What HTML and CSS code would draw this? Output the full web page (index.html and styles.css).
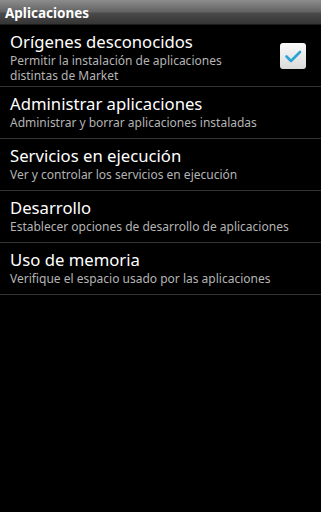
FILE: index.html
```html
<!DOCTYPE html>
<html lang="es">
<head>
  <meta charset="UTF-8">
  <title>Aplicaciones</title>
  <meta name="viewport" content="width=device-width, initial-scale=1.0">
  <link rel="stylesheet" href="styles.css">
</head>
<body>
  <header class="titlebar">Aplicaciones</header>
  <ul class="prefs">
    <li class="pref tall">
      <div class="pref-text">
        <div class="pref-title">Orígenes desconocidos</div>
        <div class="pref-summary">Permitir la instalación de aplicaciones distintas de Market</div>
      </div>
      <span class="check">
        <svg viewBox="0 0 26 26" width="26" height="26">
          <path d="M6.5 13.5 L11 18 L20 9" fill="none" stroke="#2aa5d3" stroke-width="2.6" stroke-linecap="round" stroke-linejoin="round"/>
        </svg>
      </span>
    </li>
    <li class="pref">
      <div class="pref-text">
        <div class="pref-title">Administrar aplicaciones</div>
        <div class="pref-summary">Administrar y borrar aplicaciones instaladas</div>
      </div>
    </li>
    <li class="pref">
      <div class="pref-text">
        <div class="pref-title">Servicios en ejecución</div>
        <div class="pref-summary">Ver y controlar los servicios en ejecución</div>
      </div>
    </li>
    <li class="pref">
      <div class="pref-text">
        <div class="pref-title">Desarrollo</div>
        <div class="pref-summary">Establecer opciones de desarrollo de aplicaciones</div>
      </div>
    </li>
    <li class="pref">
      <div class="pref-text">
        <div class="pref-title">Uso de memoria</div>
        <div class="pref-summary">Verifique el espacio usado por las aplicaciones</div>
      </div>
    </li>
  </ul>
</body>
</html>
```
FILE: styles.css
```css
html, body {
  margin: 0;
  padding: 0;
  background: #000;
  height: 100%;
}
body {
  font-family: "Noto Sans", "Open Sans", sans-serif;
  color: #fff;
}
.titlebar {
  height: 25px;
  line-height: 27px;
  padding-left: 5px;
  font-size: 13.5px;
  font-weight: bold;
  background: linear-gradient(#8c8c8c, #626262 48%, #4a4a4a 52%, #333);
  box-shadow: inset 0 -1px 0 #1c1c1c;
}
.prefs {
  list-style: none;
  margin: 0;
  padding: 0;
}
.pref {
  display: flex;
  align-items: flex-start;
  box-sizing: border-box;
  height: 52px;
  padding: 7px 15px 0 10px;
  border-bottom: 1px solid #333;
}
.pref.tall {
  height: 62px;
  padding-top: 6.5px;
}
.pref-text {
  flex: 1;
}
.pref-title {
  font-size: 16.7px;
  line-height: 20px;
}
.pref-summary {
  margin-top: 1px;
  font-size: 12px;
  line-height: 15px;
  color: #b4b4b4;
}
.check {
  align-self: center;
  width: 26px;
  height: 26px;
  margin: -6px 0 0 12px;
  border-radius: 3px;
  background: linear-gradient(#fafafa, #dadada);
}
.check svg {
  display: block;
}
```
